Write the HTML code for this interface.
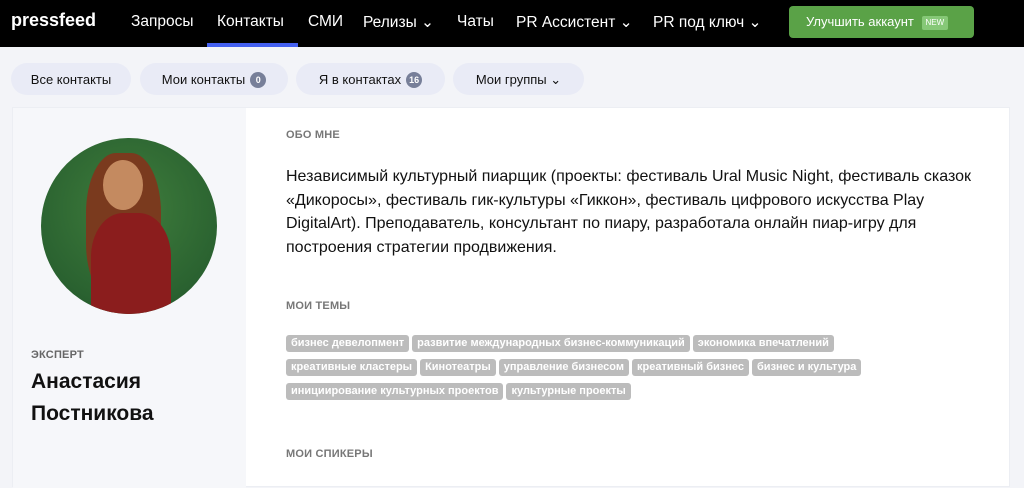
<!DOCTYPE html>
<html><head><meta charset="utf-8"><style>
*{margin:0;padding:0;box-sizing:border-box}
body{width:1024px;height:471px;overflow:hidden;background:#f3f4f8;font-family:"Liberation Sans","Noto Sans CJK SC",sans-serif;position:relative}
.nav{position:absolute;left:0;top:0;width:1024px;height:47px;background:#000;color:#fff}
.nav .i{position:absolute;top:13px;font-size:15.5px}
.logo{left:11px;font-weight:bold;font-size:18px!important;top:10px!important}
.ul{position:absolute;left:207px;top:43px;width:91px;height:4px;background:#4460f0}
.btn{position:absolute;left:789px;top:6px;width:185px;height:32px;background:#5aa247;border-radius:4px;color:#fff;font-size:13px;padding:8px 0 0 17px;white-space:nowrap}
.new{display:inline-block;background:#86c877;font-size:8px;padding:2px 4px;border-radius:2px;margin-left:4px;vertical-align:1px;line-height:10px}
.pill{position:absolute;top:63px;height:32px;background:#e9ebf6;border-radius:16px;font-size:13px;color:#111;padding:9px 0 0 0;text-align:center}
.bd{display:inline-block;background:#777f99;color:#fff;font-size:9px;border-radius:8px;min-width:16px;height:16px;line-height:16px;margin-left:5px;vertical-align:1px;font-weight:bold}
.card{position:absolute;left:12px;top:107px;width:998px;height:380px;background:#fff;border:1px solid #eceef3}
.left{position:absolute;left:0;top:0;width:233px;height:380px;background:#f6f7fa}
.av{position:absolute;left:28px;top:30px;width:176px;height:176px;border-radius:50%;overflow:hidden;background:radial-gradient(circle at 50% 40%,#3f7d3c,#2a6230 70%,#1e4d25)}
.h{position:absolute;font-size:11px;color:#777;font-weight:bold;letter-spacing:.2px}
.tags{position:absolute;left:273px;top:227px;width:640px;display:flex;flex-wrap:wrap;row-gap:7px;column-gap:3px}
.t{display:block;background:#bcbcbc;color:#fff;font-size:11px;font-weight:bold;height:17px;line-height:17px;padding:0 5px;border-radius:3px}
</style></head><body>
<div class="nav">
<span class="i logo">pressfeed</span>
<span class="i" style="left:131px">Запросы</span>
<span class="i" style="left:217px">Контакты</span>
<span class="i" style="left:308px">СМИ</span>
<span class="i" style="left:363px">Релизы ⌄</span>
<span class="i" style="left:457px">Чаты</span>
<span class="i" style="left:516px">PR Ассистент ⌄</span>
<span class="i" style="left:653px">PR под ключ ⌄</span>
<div class="ul"></div>
<div class="btn">Улучшить аккаунт <span class="new">NEW</span></div>
</div>
<div class="pill" style="left:11px;width:120px">Все контакты</div>
<div class="pill" style="left:140px;width:148px">Мои контакты<span class="bd">0</span></div>
<div class="pill" style="left:296px;width:149px">Я в контактах<span class="bd">16</span></div>
<div class="pill" style="left:453px;width:131px">Мои группы ⌄</div>
<div class="card">
<div class="left">
<div class="av"><div style="position:absolute;left:45px;top:15px;width:75px;height:150px;border-radius:40%;background:#7a3a1e"></div><div style="position:absolute;left:62px;top:22px;width:40px;height:50px;border-radius:50%;background:#c48a60"></div><div style="position:absolute;left:50px;top:75px;width:80px;height:110px;border-radius:40% 40% 0 0;background:#8b1d1d"></div></div>
<div class="h" style="left:18px;top:241px;color:#666">ЭКСПЕРТ</div>
<div style="position:absolute;left:18px;top:258px;font-size:21px;font-weight:bold;line-height:32px;color:#111">Анастасия<br>Постникова</div>
</div>
<div class="h" style="left:273px;top:21px">ОБО МНЕ</div>
<div style="position:absolute;left:273px;top:57px;width:700px;font-size:16px;line-height:23.5px;color:#111">Независимый культурный пиарщик (проекты: фестиваль Ural Music Night, фестиваль сказок «Дикоросы», фестиваль гик-культуры «Гиккон», фестиваль цифрового искусства Play DigitalArt). Преподаватель, консультант по пиару, разработала онлайн пиар-игру для построения стратегии продвижения.</div>
<div class="h" style="left:273px;top:192px">МОИ ТЕМЫ</div>
<div class="tags"><span class="t">бизнес девелопмент</span><span class="t">развитие международных бизнес-коммуникаций</span><span class="t">экономика впечатлений</span><span class="t">креативные кластеры</span><span class="t">Кинотеатры</span><span class="t">управление бизнесом</span><span class="t">креативный бизнес</span><span class="t">бизнес и культура</span><span class="t">инициирование культурных проектов</span><span class="t">культурные проекты</span></div>
<div class="h" style="left:273px;top:340px">МОИ СПИКЕРЫ</div>
</div>
</body></html>
